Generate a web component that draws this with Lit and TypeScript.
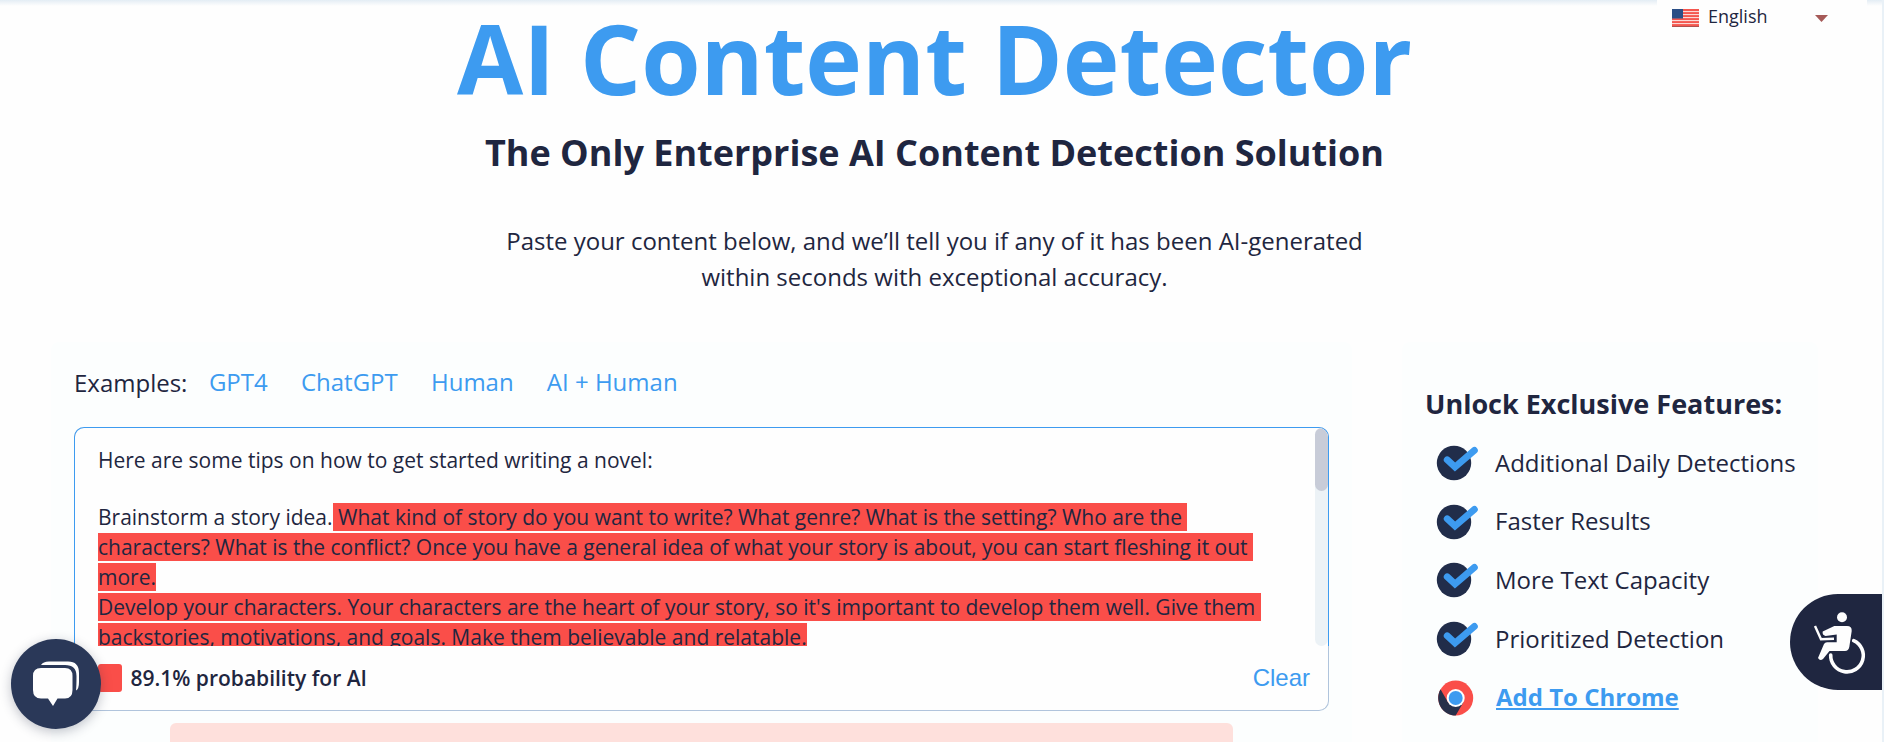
import { LitElement, html, css, svg } from "lit";
import { customElement } from "lit/decorators.js";

const check = html`<svg class="ico" width="44" height="40" viewBox="0 0 44 40">
  <circle cx="18" cy="20" r="17.2" fill="#212d4a"></circle>
  <path d="M11.200 16.800 L19 24 L38.400 7.400" fill="none" stroke="#3d9bf0" stroke-width="6.8" stroke-linecap="round"></path>
</svg>`;

const features = ["Additional Daily Detections", "Faster Results", "More Text Capacity", "Prioritized Detection"];
const examples = ["GPT4", "ChatGPT", "Human", "AI + Human"];

@customElement("app-root")
export class AppRoot extends LitElement {
  static styles = css`
    :host { display: block; position: relative; width: 1884px; height: 742px; overflow: hidden; background: #fefefe; color: #1f2640; font-family: "Open Sans", sans-serif; box-sizing: border-box; border-right: 2px solid #e9f1f7; }
    * { box-sizing: border-box; }
    .shade { position: absolute; top: 0; left: 0; right: 0; height: 6px; background: linear-gradient(#e3edf5 0, #ecf2f7 30%, #fefefe 100%); }
    .hero { width: 1869px; display: flex; flex-direction: column; align-items: center; padding-top: 9px; white-space: nowrap; text-align: center; }
    .title { margin: 0; font-size: 96px; line-height: 97px; font-weight: 700; color: #3d9bf0; }
    .sub { margin: 28px 0 0; font-size: 36px; line-height: 37px; font-weight: 700; }
    .lead { margin: 51.5px 0 0; font-size: 24px; line-height: 36px; }
    .cols { display: flex; gap: 50px; margin-top: 47.5px; padding-left: 51px; }
    .card { background: #fcfefe; height: 420px; border-radius: 8px 8px 0 0; }
    .left { width: 1301px; padding: 24px 23px 0; }
    .right { width: 416px; padding: 43px 0 0 23px; }
    .examples { display: flex; height: 33px; line-height: 33px; font-size: 24px; white-space: nowrap; }
    .links { display: flex; gap: 33.2px; margin-left: 21.5px; color: #3d9bf0; margin-top: -1px; }
    .editor { margin-top: 28px; height: 284px; width: 1255px; border: 1px solid #b0c4dc; border-top: 0; border-radius: 10px; background: #fefefe; display: flex; flex-direction: column; }
    .scroll { height: 219px; margin: 0 -1px; border: 1px solid #3d9bf0; border-bottom: 0; border-radius: 10px 10px 0 0; display: flex; justify-content: space-between; overflow: hidden; flex: none; }
    .text { padding: 17px 0 0 23px; font-size: 21px; line-height: 30px; white-space: pre; }
    .gap { height: 27px; }
    .hl { background: #fa4e49; }
    .track { width: 13px; height: 218px; border-radius: 7px; background: #ecf2f6; }
    .thumb { height: 63px; border-radius: 7px; background: #c8ccd8; }
    .foot { display: flex; align-items: center; padding: 0 18px 0 23px; height: 64px; }
    .badge { width: 24px; height: 28px; border-radius: 3px; background: #fa4e49; }
    .prob { margin-left: 8.500px; font-size: 21px; line-height: 28px; font-weight: 600; flex: 1; white-space: nowrap; }
    .clear { font: 24px "Liberation Sans", Arial, sans-serif; color: #3d9bf0; }
    .result { margin: 12px 0 0 96px; width: 1063px; height: 40px; border-radius: 6px; background: #fee0dc; }
    .h { margin: 0 0 11px; font-size: 27px; line-height: 37px; font-weight: 700; white-space: nowrap; }
    .item { display: flex; align-items: center; height: 58.6px; font-size: 24px; padding-left: 11px; white-space: nowrap; }
    .ico { flex: none; margin: 2px 15px 0 0; }
    .add { margin-left: 1px; color: #3d9bf0; font-weight: 700; text-decoration: underline; text-decoration-thickness: 2px; text-underline-offset: 2px; text-decoration-skip-ink: none; }
    .lang { position: absolute; left: 1657px; top: 0; width: 210px; height: 32px; background: #fefefe; display: flex; align-items: center; padding-left: 15px; font-size: 18px; line-height: 24px; }
    .flag { margin: 4px 9px 0 0; }
    .caret { margin: 5px 39px 0 auto; }
    .chat { position: absolute; left: 11px; top: 639px; width: 90px; height: 90px; border-radius: 50%; background: #2a3858; box-shadow: 0 3px 12px rgba(31,38,64,.28); }
    .a11y { position: absolute; left: 1790px; top: 594px; width: 92px; height: 96px; border-radius: 48px 0 0 48px; background: #1f2640; }
  `;

  render() {
    return html`
      <div class="shade"></div>
      <div class="hero">
        <h1 class="title">AI Content Detector</h1>
        <h2 class="sub">The Only Enterprise AI Content Detection Solution</h2>
        <p class="lead">Paste your content below, and we’ll tell you if any of it has been AI-generated<br>within seconds with exceptional accuracy.</p>
      </div>
      <div class="cols">
        <section class="card left">
          <div class="examples"><span>Examples:</span><div class="links">${examples.map((e) => html`<span>${e}</span>`)}</div></div>
          <div class="editor">
            <div class="scroll">
              <div class="text"><div>Here are some tips on how to get started writing a novel:</div><div class="gap"></div><div>Brainstorm a story idea.<span class="hl"> What kind of story do you want to write? What genre? What is the setting? Who are the </span></div><div><span class="hl">characters? What is the conflict? Once you have a general idea of what your story is about, you can start fleshing it out </span></div><div><span class="hl">more.</span></div><div><span class="hl">Develop your characters. Your characters are the heart of your story, so it's important to develop them well. Give them </span></div><div><span class="hl">backstories, motivations, and goals. Make them believable and relatable.</span></div></div>
              <div class="track"><div class="thumb"></div></div>
            </div>
            <div class="foot"><span class="badge"></span><span class="prob">89.1% probability for AI</span><span class="clear">Clear</span></div>
          </div>
          <div class="result"></div>
        </section>
        <section class="card right">
          <h3 class="h">Unlock Exclusive Features:</h3>
          ${features.map((t) => html`<div class="item">${check}<span>${t}</span></div>`)}
          <div class="item"><svg class="ico" width="44" height="40" viewBox="0 0 44 40">
            <circle cx="19.7" cy="20" r="17.5" fill="#fa4e49"></circle>
            <path d="M4.500 11.300 A17.5 17.5 0 0 0 19.7 37.5 L27.3 24.4 L12.1 24.4 Z" fill="#27304a"></path>
            <circle cx="19.7" cy="20" r="9" fill="#fefefe"></circle><circle cx="19.7" cy="20" r="7" fill="#3d9bf0"></circle>
          </svg><span class="add">Add To Chrome</span></div>
        </section>
      </div>
      <div class="lang">
        <svg class="flag" width="27" height="18" viewBox="0 0 27 18"><rect width="27" height="18" fill="#f4574f"></rect>
          ${[2, 5, 8, 11, 14].map((y) => svg`<rect y=${y} width="27" height="1.1" fill="#fbd9d6"></rect>`)}
          <rect y="17" width="27" height="1" fill="#b0524f"></rect>
          <rect width="11" height="9.5" fill="#2b4f86"></rect></svg>
        <span>English</span>
        <svg class="caret" width="13" height="7" viewBox="0 0 13 7"><path d="M0 0H13L6.5 7Z" fill="#a65a58"></path></svg>
      </div>
      <div class="chat"><svg width="90" height="90" viewBox="0 0 90 90" fill="#fefefe">
        <path d="M30 26 Q32 22.500 38 22.500 H57 Q68 22.500 68 34 V43 Q68 50 65 51.500 Q65.500 47 65.500 37 Q65.500 26 54 26 Z"></path>
        <path d="M30 29 H54 Q61.500 29 61.500 37 V51 Q61.500 59.500 54 59.500 H46.500 L42 67 L37 59.500 H30 Q22 59.500 22 51 V37 Q22 29 30 29Z"></path>
      </svg></div>
      <div class="a11y"><svg width="92" height="96" viewBox="0 0 92 96" fill="#fefefe">
        <circle cx="52" cy="23.300" r="5"></circle>
        <path d="M44.300 32 H57 Q62 32 61.700 37 L59.300 53 Q58.500 57 55 57 H39.500 L33 65 Q30 67.500 28 64 L34 50 Q35 48.200 37 48.200 H46.700 V40.500 L35.500 42 Q32 41 32.700 37.500 Z"></path>
        <path d="M25 32 L31 45.300 L44 44.800" fill="none" stroke="#fefefe" stroke-width="2.400"></path>
        <path d="M63.700 46.700 A16.300 16.300 0 1 1 40.700 61" fill="none" stroke="#fefefe" stroke-width="3.600" stroke-linecap="round"></path>
      </svg></div>
    `;
  }
}
